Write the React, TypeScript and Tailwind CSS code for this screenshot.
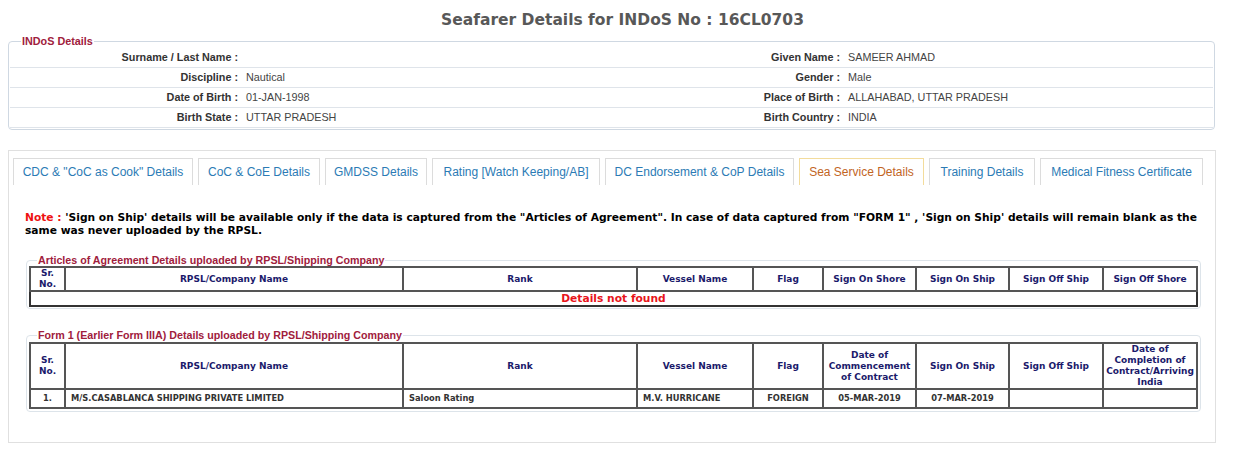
import React from "react";

const tabs = [
  { label: 'CDC & "CoC as Cook" Details', w: 180 },
  { label: "CoC & CoE Details", w: 122 },
  { label: "GMDSS Details", w: 102 },
  { label: "Rating [Watch Keeping/AB]", w: 168 },
  { label: "DC Endorsement & CoP Details", w: 189 },
  { label: "Sea Service Details", w: 125, active: true },
  { label: "Training Details", w: 106 },
  { label: "Medical Fitness Certificate", w: 163 },
];

const info = [
  ["Surname / Last Name :", "", "Given Name :", "SAMEER AHMAD"],
  ["Discipline :", "Nautical", "Gender :", "Male"],
  ["Date of Birth :", "01-JAN-1998", "Place of Birth :", "ALLAHABAD, UTTAR PRADESH"],
  ["Birth State :", "UTTAR PRADESH", "Birth Country :", "INDIA"],
];

const colWidths = [35, 338, 234, 116, 70, 93, 93, 94, 94];

function Cols() {
  return (
    <colgroup>
      {colWidths.map((w, i) => (
        <col key={i} style={{ width: w }} />
      ))}
    </colgroup>
  );
}

const th =
  "border-2 border-[#555] p-0 text-center align-middle font-bold text-[9px] leading-[11px] text-[#1b1a6b]";
const td =
  "border-2 border-[#555] p-0 align-middle font-bold text-[8.3px] leading-[17px] text-[#333]";

export default function App() {
  return (
    <div className="w-[1258px] h-[457px] bg-white font-['Liberation_Sans',Arial,sans-serif] pl-[8px] pt-[6px]">
      <div className="w-[1229px] text-center font-['DejaVu_Sans',Verdana,sans-serif] font-bold text-[15.5px] leading-[28px] text-[#585858]">
        Seafarer Details for INDoS No : 16CL0703
      </div>

      <fieldset className="mt-[1px] w-[1207px] border border-[#cfd8e2] rounded-[4px] px-[1px] pb-[1px]">
        <legend className="ml-[11px] px-[1px] text-[10.8px] leading-[12px] font-bold text-[#a0203c]">
          INDoS Details
        </legend>
        {info.map((r, i) => (
          <div
            key={i}
            className={
              (i === 0 ? "h-[21px] " : "h-[20px] ") +
              "grid grid-cols-[230px_404px_198px_1fr] items-center border-b border-[#dfe4ea] text-[10.8px] text-[#333]"
            }
          >
            <div className="text-right font-bold pr-[2px]">{r[0]}</div>
            <div className="pl-[6px] text-[#444]">{r[1]}</div>
            <div className="text-right font-bold pr-[2px]">{r[2]}</div>
            <div className="pl-[6px] text-[#444]">{r[3]}</div>
          </div>
        ))}
      </fieldset>

      <div className="mt-[20px] w-[1208px] h-[293px] border border-[#e0e0e0] pt-[7px] pl-[4px]">
        <div className="flex gap-[5px] h-[27px]">
          {tabs.map((t) => (
            <div
              key={t.label}
              style={{ width: t.w }}
              className={
                t.active
                  ? "shrink-0 h-[27px] border-t border-l border-r border-[#f3dc9c] text-center text-[12px] leading-[27px] text-[#c2651f]"
                  : "shrink-0 h-[27px] border-t border-l border-r border-[#dcdcdc] text-center text-[12px] leading-[27px] text-[#2b7bb5]"
              }
            >
              {t.label}
            </div>
          ))}
        </div>

        <p className="mt-[26px] pl-[12px] pr-[12px] font-['DejaVu_Sans',Verdana,sans-serif] font-bold text-[10.68px] leading-[13px] text-black">
          <span className="text-[#ee1111]">Note :</span> 'Sign on Ship' details will be available only if the data is
          captured from the "Articles of Agreement". In case of data captured from "FORM 1" , 'Sign on Ship' details
          will remain blank as the same was never uploaded by the RPSL.
        </p>

        <fieldset className="mt-[17px] ml-[13px] w-[1173px] border border-[#dde4ea] rounded-[4px] px-[2px] pb-[1px]">
          <legend className="ml-[8px] px-[1px] text-[10.7px] leading-[12px] font-bold text-[#a0203c]">
            Articles of Agreement Details uploaded by RPSL/Shipping Company
          </legend>
          <table className="table-fixed border-collapse w-[1167px] border-2 border-[#333] font-['DejaVu_Sans',Verdana,sans-serif]">
            <Cols />
            <thead>
              <tr>
                <th className={th}>
                  Sr.
                  <br />
                  No.
                </th>
                <th className={th}>RPSL/Company Name</th>
                <th className={th}>Rank</th>
                <th className={th}>Vessel Name</th>
                <th className={th}>Flag</th>
                <th className={th}>Sign On Shore</th>
                <th className={th}>Sign On Ship</th>
                <th className={th}>Sign Off Ship</th>
                <th className={th}>Sign Off Shore</th>
              </tr>
            </thead>
            <tbody>
              <tr>
                <td
                  colSpan={9}
                  className="border-2 border-[#333] p-0 text-center font-bold text-[10.7px] leading-[13px] text-[#e8141b]"
                >
                  Details not found
                </td>
              </tr>
            </tbody>
          </table>
        </fieldset>

        <fieldset className="mt-[20px] ml-[13px] w-[1173px] border border-[#dde4ea] rounded-[4px] px-[2px] pb-[2px]">
          <legend className="ml-[8px] px-[1px] text-[10.7px] leading-[12px] font-bold text-[#a0203c]">
            Form 1 (Earlier Form IIIA) Details uploaded by RPSL/Shipping Company
          </legend>
          <table className="mt-[1px] table-fixed border-collapse w-[1167px] border-2 border-[#333] font-['DejaVu_Sans',Verdana,sans-serif]">
            <Cols />
            <thead>
              <tr className="h-[45px]">
                <th className={th}>
                  Sr.
                  <br />
                  No.
                </th>
                <th className={th}>RPSL/Company Name</th>
                <th className={th}>Rank</th>
                <th className={th}>Vessel Name</th>
                <th className={th}>Flag</th>
                <th className={th}>
                  Date of
                  <br />
                  Commencement
                  <br />
                  of Contract
                </th>
                <th className={th}>Sign On Ship</th>
                <th className={th}>Sign Off Ship</th>
                <th className={th}>
                  Date of
                  <br />
                  Completion of
                  <br />
                  <span className="whitespace-nowrap">Contract/Arriving</span>
                  <br />
                  India
                </th>
              </tr>
            </thead>
            <tbody>
              <tr>
                <td className={td + " text-center"}>1.</td>
                <td className={td + " pl-[5px]"}>M/S.CASABLANCA SHIPPING PRIVATE LIMITED</td>
                <td className={td + " pl-[5px]"}>Saloon Rating</td>
                <td className={td + " pl-[5px]"}>M.V. HURRICANE</td>
                <td className={td + " text-center"}>FOREIGN</td>
                <td className={td + " text-center"}>05-MAR-2019</td>
                <td className={td + " text-center"}>07-MAR-2019</td>
                <td className={td}></td>
                <td className={td}></td>
              </tr>
            </tbody>
          </table>
        </fieldset>
      </div>
    </div>
  );
}
